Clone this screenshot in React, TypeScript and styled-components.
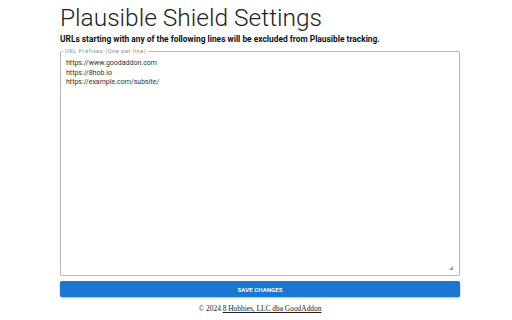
import React from "react";
import styled, { createGlobalStyle } from "styled-components";

const Global = createGlobalStyle`
  html, body { margin: 0; padding: 0; background: #fff; }
  body { font-family: "Liberation Serif", serif; }
`;

const Page = styled.div`
  width: 400px;
  margin: 0 0 0 60px;
  display: flex;
  flex-direction: column;
`;

const Title = styled.h1`
  margin: 0;
  padding-top: 4px;
  font-family: Roboto, sans-serif;
  font-weight: 300;
  font-size: 24.5px;
  line-height: 28px;
  color: #222;
`;

const Subtitle = styled.p`
  margin: 2px 0 0;
  font-family: Roboto, sans-serif;
  font-weight: 700;
  font-size: 8.4px;
  line-height: 11px;
  color: #111;
`;

const Field = styled.fieldset`
  position: relative;
  margin: 4px 0 0;
  padding: 1px 4px 3px 5px;
  border: 1px solid #b8b8b8;
  border-radius: 2px;
  min-width: 0;
`;

const Legend = styled.legend`
  font-family: Roboto, sans-serif;
  font-size: 5.6px;
  letter-spacing: 0.55px;
  color: #8a8a8a;
  padding: 0 2px;
  margin-left: -3px;
  line-height: 5px;
`;

const Area = styled.textarea`
  display: block;
  width: 100%;
  height: 217px;
  box-sizing: border-box;
  border: none;
  outline: none;
  resize: none;
  font-family: Roboto, sans-serif;
  font-size: 7px;
  line-height: 9.5px;
  color: #333;
  padding: 4px 0 0;
  margin: 0;
  background: transparent;
`;

const Grip = styled.span`
  position: absolute;
  right: 6px;
  bottom: 5px;
  width: 0;
  height: 0;
  border-style: solid;
  border-width: 0 0 4px 4px;
  border-color: transparent transparent #9a9a9a transparent;
`;

const Button = styled.button`
  margin-top: 5px;
  height: 16px;
  border: none;
  border-radius: 2px;
  background: #1976d2;
  color: #fff;
  font-family: Roboto, sans-serif;
  font-weight: 700;
  font-size: 6px;
  letter-spacing: 0.1px;
  box-shadow: 0 1px 2px rgba(0, 0, 0, 0.3);
  padding: 0;
`;

const Footer = styled.p`
  margin: 7px 0 0;
  text-align: center;
  font-family: "Liberation Serif", serif;
  font-size: 7.4px;
  color: #222;
`;

const Link = styled.a`
  color: #222;
  text-decoration: underline;
`;

export default function App() {
  return (
    <>
      <Global />
      <Page>
        <Title>Plausible Shield Settings</Title>
        <Subtitle>
          URLs starting with any of the following lines will be excluded from Plausible tracking.
        </Subtitle>
        <Field>
          <Legend>URL Prefixes (One per line)</Legend>
          <Area
            spellCheck={false}
            defaultValue={"https://www.goodaddon.com\nhttps://8hob.io\nhttps://example.com/subsite/"}
          />
          <Grip />
        </Field>
        <Button>SAVE CHANGES</Button>
        <Footer>
          © 2024 <Link href="#">8 Hobbies, LLC dba GoodAddon</Link>
        </Footer>
      </Page>
    </>
  );
}
